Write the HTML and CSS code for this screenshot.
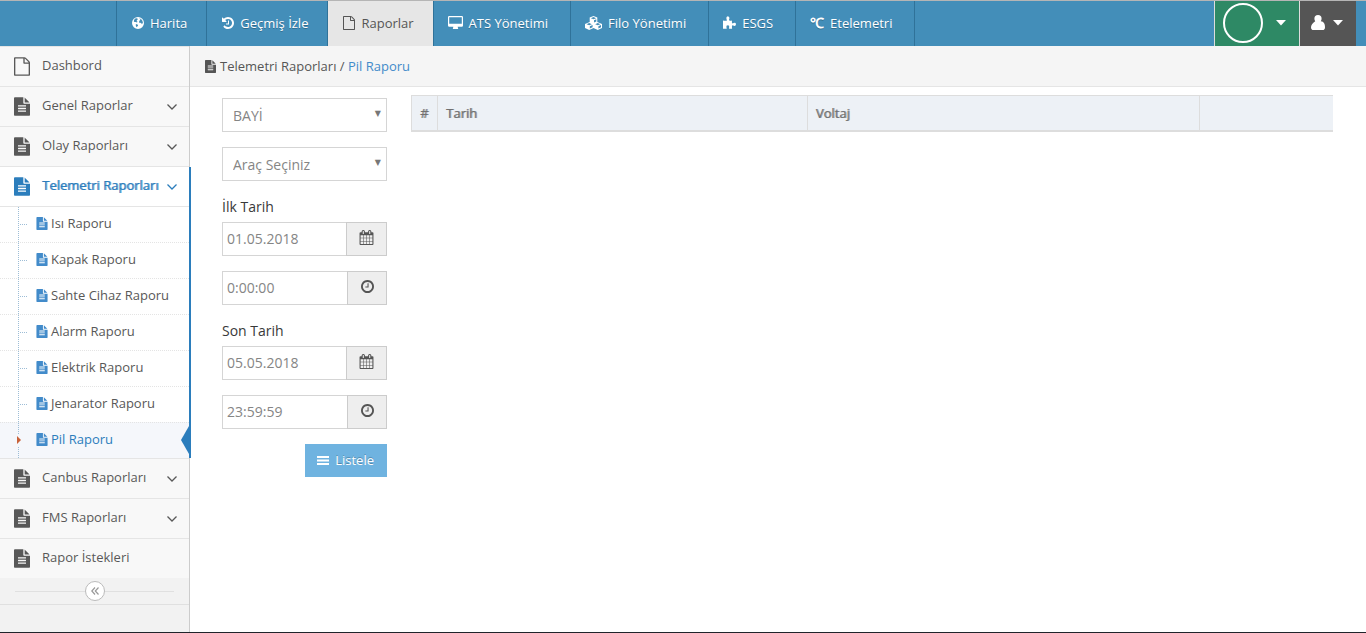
FILE: index.html
```html
<!DOCTYPE html>
<html lang="tr">
<head>
<meta charset="utf-8">
<title>Pil Raporu</title>
<link rel="stylesheet" href="styles.css">
</head>
<body>
<svg class="sprite" aria-hidden="true">
  <symbol id="doc" viewBox="0 0 1536 1792"><path d="M1468 476q14 14 28 36h-472v-472q22 14 36 28zm-476 164h544v1056q0 40-28 68t-68 28h-1344q-40 0-68-28t-28-68v-1600q0-40 28-68t68-28h800v544q0 40 28 68t68 28zm160 736v-64q0-14-9-23t-23-9h-704q-14 0-23 9t-9 23v64q0 14 9 23t23 9h704q14 0 23-9t9-23zm0-256v-64q0-14-9-23t-23-9h-704q-14 0-23 9t-9 23v64q0 14 9 23t23 9h704q14 0 23-9t9-23zm0-256v-64q0-14-9-23t-23-9h-704q-14 0-23 9t-9 23v64q0 14 9 23t23 9h704q14 0 23-9t9-23z"/></symbol>
  <symbol id="doc-o" viewBox="0 0 1536 1792"><path d="M1468 380q28 28 48 76t20 88v1152q0 40-28 68t-68 28h-1344q-40 0-68-28t-28-68v-1600q0-40 28-68t68-28h896q40 0 88 20t76 48zm-444-244v376h376q-10-29-22-41l-313-313q-12-12-41-22zm384 1528v-1024h-416q-40 0-68-28t-28-68v-416h-768v1536h1280z"/></symbol>
  <symbol id="calendar" viewBox="64 0 1664 1792"><path d="M192 1664h288v-288h-288v288zm352 0h320v-288h-320v288zm-352-352h288v-320h-288v320zm352 0h320v-320h-320v320zm-352-384h288v-288h-288v288zm736 736h320v-288h-320v288zm-384-736h320v-288h-320v288zm768 736h288v-288h-288v288zm-384-352h320v-320h-320v320zm-352-864v-288q0-13-9.500-22.500t-22.500-9.500h-64q-13 0-22.500 9.500t-9.500 22.500v288q0 13 9.500 22.500t22.500 9.500h64q13 0 22.500-9.500t9.500-22.500zm736 864h288v-320h-288v320zm-384-384h320v-288h-320v288zm384 0h288v-288h-288v288zm32-480v-288q0-13-9.500-22.500t-22.500-9.500h-64q-13 0-22.500 9.500t-9.500 22.500v288q0 13 9.500 22.500t22.500 9.500h64q13 0 22.500-9.500t9.500-22.500zm384-64v1280q0 52-38 90t-90 38h-1408q-52 0-90-38t-38-90v-1280q0-52 38-90t90-38h128v-96q0-66 47-113t113-47h64q66 0 113 47t47 113v96h384v-96q0-66 47-113t113-47h64q66 0 113 47t47 113v96h128q52 0 90 38t38 90z"/></symbol>
  <symbol id="clock" viewBox="128 128 1536 1536"><path d="M1024 544v448q0 14-9 23t-23 9h-320q-14 0-23-9t-9-23v-64q0-14 9-23t23-9h224v-352q0-14 9-23t23-9h64q14 0 23 9t9 23zm416 352q0-148-73-273t-198-198-273-73-273 73-198 198-73 273 73 273 198 198 273 73 273-73 198-198 73-273zm224 0q0 209-103 385.500t-279.500 279.500-385.500 103-385.500-103-279.500-279.500-103-385.500 103-385.500 279.500-279.500 385.500-103 385.500 103 279.500 279.500 103 385.500z"/></symbol>
  <symbol id="history" viewBox="128 128 1536 1536"><path d="M1664 896q0 156-61 298t-164 245-245 164-298 61q-172 0-327-72.500t-264-204.500q-7-10-6.500-22.500t8.500-20.500l137-138q10-9 25-9 16 2 23 12 73 95 179 147t225 52q104 0 198.500-40.500t163.500-109.500 109.500-163.500 40.500-198.500-40.500-198.500-109.500-163.500-163.500-109.500-198.500-40.500q-98 0-188 35.500t-160 101.500l137 138q31 30 14 69-17 40-59 40h-448q-26 0-45-19t-19-45v-448q0-42 40-59 39-17 69 14l130 129q107-101 244.500-156.500t284.500-55.500q156 0 298 61t245 164 164 245 61 298zm-640-288v448q0 14-9 23t-23 9h-320q-14 0-23-9t-9-23v-64q0-14 9-23t23-9h224v-352q0-14 9-23t23-9h64q14 0 23 9t9 23z"/></symbol>
  <symbol id="globe" viewBox="0 0 12 12"><path fill-rule="evenodd" d="M6 0a6 6 0 1 0 0 12a6 6 0 0 0 0-12zM3.200 1.600l1.600-.4 1.200.7-.7.8-.8 1.200 1 .6-.5.900-1.400-.5-1.200.2-.6-.8c.1-1 .6-2 1.400-2.700zM7.200 1.200l1.800.8 1.400 1.700.5 2.100-1 1.500-.9-1.500-1.300.2-.7-1 .6-1.500.9-.7zM3.900 7l1.700.5.5 1-.8.9-.8.8-.7-1.600z"/></symbol>
  <symbol id="desktop" viewBox="0 0 15 13"><path fill-rule="evenodd" d="M1.200 0h12.600Q15 0 15 1.200v8.300q0 1.200-1.200 1.200H9.600l.5 1.500v.8H4.900v-.8l.5-1.500H1.200Q0 10.700 0 9.500V1.200Q0 0 1.200 0zM1.200 1.200v6.500h12.600V1.200z"/></symbol>
  <symbol id="cubes" viewBox="0 0 17 14"><path fill-rule="evenodd" d="M8.500 0l3.800 1.600v4.300L17 8v4l-4.200 2-4.300-1.900L4.200 14 0 12V8l4.700-2.100V1.600zM8.500 1.100L5.900 2.200l2.600 1.100 2.600-1.100zM9 4.300v2.300l2.300-1V3.300zM4.200 7.100L1.600 8.200l2.600 1.100 2.600-1.100zM4.800 10.300v2.300l2.800-1.300V9.100zM12.800 7.100l-2.600 1.100 2.600 1.100 2.600-1.100zM13.400 10.300v2.300l2.600-1.300V9.100z"/></symbol>
  <symbol id="puzzle" viewBox="0 0 13 13"><path d="M0 4.500q2 .5 3.700.2Q4.300 4.200 3.400 3 3 .5 4.800.3q2 .1 1.600 2.400-.9 1.400-.1 1.900 1.500.3 2.700-.2-.2 1.500 0 2.600.5.800 1.600 0Q12.900 6.300 13 8.300q-.2 2-2.100 1.500-1.500-1-1.900 0-.2 1.300.1 3H6.300q-.8-.5-.1-1.500.5-2-1.300-2.100-2 .1-1.500 2 .8 1.100 0 1.600H0z"/></symbol>
  <symbol id="user" viewBox="0 0 14 15"><path d="M7 0a3.700 3.700 0 0 1 3.600 3.700q0 1.400-.8 2.500C13 6.500 14 9 14 12.200Q14 15 11.500 15h-9Q0 15 0 12.200 0 9 4.200 6.200a4 4 0 0 1-.8-2.500A3.700 3.700 0 0 1 7 0z"/></symbol>
  <symbol id="caret" viewBox="0 0 10 6"><path d="M0 0h10L5 5.500z"/></symbol>
  <symbol id="chevron" viewBox="0 0 10 6"><path d="M.5.500L5 5 9.500.500" fill="none" stroke="currentColor" stroke-width="1.300"/></symbol>
  <symbol id="double-left" viewBox="0 0 8 8"><path d="M4 .5L.8 4 4 7.500M7.500.5L4.300 4l3.200 3.500" fill="none" stroke="currentColor" stroke-width="1.200"/></symbol>
  <symbol id="bars" viewBox="0 0 12 9"><path d="M0 0h12v2H0zM0 3.500h12v2H0zM0 7h12v2H0z"/></symbol>
</svg>

<header class="navbar">
  <nav class="nav-main">
    <a href="#"><svg class="i12"><use href="#globe"/></svg>Harita</a>
    <a href="#"><svg class="i12"><use href="#history"/></svg>Geçmiş İzle</a>
    <a href="#" class="current"><svg class="i-doc-nav"><use href="#doc-o"/></svg>Raporlar</a>
    <a href="#" class="wide"><svg class="i-desktop"><use href="#desktop"/></svg>ATS Yönetimi</a>
    <a href="#" class="wide"><svg class="i-cubes"><use href="#cubes"/></svg>Filo Yönetimi</a>
    <a href="#" class="wide"><svg class="i13"><use href="#puzzle"/></svg>ESGS</a>
    <a href="#" class="wide"><span class="celsius">℃</span>Etelemetri</a>
  </nav>
  <div class="nav-user">
    <button class="account" type="button" aria-label="Hesap"><span class="ring"></span><svg class="i-caret"><use href="#caret"/></svg></button>
    <button class="profile" type="button" aria-label="Profil"><svg class="i-user"><use href="#user"/></svg><svg class="i-caret"><use href="#caret"/></svg></button>
  </div>
</header>

<div class="page">
  <aside class="sidebar">
    <ul class="menu">
      <li><a href="#"><svg class="i-doc"><use href="#doc-o"/></svg><span>Dashbord</span></a></li>
      <li><a href="#"><svg class="i-doc"><use href="#doc"/></svg><span>Genel Raporlar</span><svg class="i-chev"><use href="#chevron"/></svg></a></li>
      <li><a href="#"><svg class="i-doc"><use href="#doc"/></svg><span>Olay Raporları</span><svg class="i-chev"><use href="#chevron"/></svg></a></li>
      <li class="open"><a href="#"><svg class="i-doc"><use href="#doc"/></svg><span>Telemetri Raporları</span><svg class="i-chev"><use href="#chevron"/></svg></a>
        <ul class="submenu">
          <li><a href="#"><svg class="i-sub"><use href="#doc"/></svg>Isı Raporu</a></li>
          <li><a href="#"><svg class="i-sub"><use href="#doc"/></svg>Kapak Raporu</a></li>
          <li><a href="#"><svg class="i-sub"><use href="#doc"/></svg>Sahte Cihaz Raporu</a></li>
          <li><a href="#"><svg class="i-sub"><use href="#doc"/></svg>Alarm Raporu</a></li>
          <li><a href="#"><svg class="i-sub"><use href="#doc"/></svg>Elektrik Raporu</a></li>
          <li><a href="#"><svg class="i-sub"><use href="#doc"/></svg>Jenarator Raporu</a></li>
          <li class="active"><a href="#"><svg class="i-sub"><use href="#doc"/></svg>Pil Raporu</a></li>
        </ul>
      </li>
      <li><a href="#"><svg class="i-doc"><use href="#doc"/></svg><span>Canbus Raporları</span><svg class="i-chev"><use href="#chevron"/></svg></a></li>
      <li><a href="#"><svg class="i-doc"><use href="#doc"/></svg><span>FMS Raporları</span><svg class="i-chev"><use href="#chevron"/></svg></a></li>
      <li><a href="#"><svg class="i-doc"><use href="#doc"/></svg><span>Rapor İstekleri</span></a></li>
    </ul>
    <div class="collapse"><button type="button" aria-label="Menüyü daralt"><svg class="i-double"><use href="#double-left"/></svg></button></div>
  </aside>

  <main class="main">
    <div class="breadcrumb"><svg class="i-crumb"><use href="#doc"/></svg><span>Telemetri Raporları / <a href="#">Pil Raporu</a></span></div>
    <div class="content">
      <form class="filters">
        <div class="select"><select aria-label="Bayi"><option>BAYİ</option></select></div>
        <div class="select"><select aria-label="Araç"><option>Araç Seçiniz</option></select></div>
        <div class="field">
          <label for="d1">İlk Tarih</label>
          <div class="group"><input id="d1" type="text" value="01.05.2018"><button type="button" aria-label="Takvim"><svg class="i-cal"><use href="#calendar"/></svg></button></div>
        </div>
        <div class="group time"><input type="text" aria-label="İlk saat" value="0:00:00"><button type="button" aria-label="Saat"><svg class="i13"><use href="#clock"/></svg></button></div>
        <div class="field">
          <label for="d2">Son Tarih</label>
          <div class="group"><input id="d2" type="text" value="05.05.2018"><button type="button" aria-label="Takvim"><svg class="i-cal"><use href="#calendar"/></svg></button></div>
        </div>
        <div class="group time"><input type="text" aria-label="Son saat" value="23:59:59"><button type="button" aria-label="Saat"><svg class="i13"><use href="#clock"/></svg></button></div>
        <button class="submit" type="button"><svg class="i-bars"><use href="#bars"/></svg>Listele</button>
      </form>
      <div class="results">
        <table>
          <colgroup><col class="c-no"><col class="c-date"><col class="c-volt"><col></colgroup>
          <thead><tr><th>#</th><th>Tarih</th><th>Voltaj</th><th></th></tr></thead>
        </table>
      </div>
    </div>
  </main>
</div>
</body>
</html>
```
FILE: styles.css
```css
* { box-sizing: border-box; }
body {
  margin: 0;
  min-height: 100vh;
  display: flex;
  flex-direction: column;
  border-top: 1px solid #b5b5b5;
  border-bottom: 1px solid #20242b;
  background: #fff;
  color: #393939;
  font: 13px/20px "Open Sans", sans-serif;
}
a { color: inherit; text-decoration: none; }
ul { list-style: none; margin: 0; padding: 0; }
button, input, select { font: inherit; border-radius: 0; margin: 0; }
svg { display: block; fill: currentColor; flex: none; }
.sprite { position: absolute; width: 0; height: 0; }

.i12 { width: 12px; height: 12px; }
.i13 { width: 13px; height: 13px; }
.i-doc-nav { width: 12px; height: 14px; }
.i-desktop { width: 15px; height: 13px; }
.i-cubes { width: 17px; height: 14px; }
.i-caret { width: 10px; height: 6px; }
.i-user { width: 14px; height: 15px; }
.i-doc { width: 16px; height: 19px; }
.i-chev { width: 10px; height: 6px; }
.i-sub { width: 12px; height: 13px; margin-top: 2px; }
.i-crumb { width: 11px; height: 13px; }
.i-double { width: 8px; height: 8px; }
.i-cal { width: 15px; height: 15px; }
.i-bars { width: 12px; height: 9px; }

/* Top bar */
.navbar { display: flex; justify-content: space-between; height: 45px; background: #438eb9; color: #fff; }
.nav-main { display: flex; margin-left: 116px; border-right: 1px solid #2f7299; }
.nav-main a {
  display: flex;
  align-items: center;
  gap: 6px;
  padding: 0 19px 2px 15px;
  border-left: 1px solid #2f7299;
  text-shadow: 0 1px 0 rgba(0, 0, 0, .25);
  white-space: nowrap;
}
.nav-main a.wide { padding: 0 22px 2px 14px; }
.nav-main a.current { background: #e6e6e6; color: #555; text-shadow: none; }
.celsius { font-weight: 700; font-size: 14px; }
.nav-user { display: flex; padding-right: 10px; }
.nav-user button { display: flex; align-items: center; border: 0; border-left: 1px solid #ddd; color: #fff; }
.nav-user .account { gap: 13px; padding: 0 13px 1px 8px; background: #2e8965; }
.ring { width: 40px; height: 40px; border: 2px solid #fff; border-radius: 50%; }
.nav-user .profile { gap: 8px; padding: 0 13px 2px 11px; background: #555; }

/* Sidebar */
.page { flex: 1; display: flex; }
.sidebar { width: 190px; flex: none; background: #f2f2f2; border-right: 1px solid #ccc; color: #585858; }
.menu > li { border-top: 1px solid #e5e5e5; background: #f8f8f8; }
.menu > li > a { display: flex; align-items: center; height: 39px; padding: 0 12px 0 14px; }
.menu > li > a > span { flex: 1; white-space: nowrap; padding: 0 0 4px 12px; }
.menu > .open { position: relative; background: #fff; }
.open > a { color: #2b7dbc; }
.open > a > span { text-shadow: 1px 0 0 rgba(43, 125, 188, .7); }
.open::after { content: ""; position: absolute; top: 0; bottom: 0; right: -2px; width: 2px; background: #2b7dbc; }
.submenu { position: relative; border-top: 1px solid #e5e5e5; }
.submenu::before { content: ""; position: absolute; z-index: 1; top: 0; bottom: 0; left: 18px; border-left: 1px dotted #9dbdd6; }
.submenu li { position: relative; }
.submenu li + li { border-top: 1px dotted #e4e4e4; }
.submenu a { display: flex; align-items: center; gap: 3px; height: 35px; padding: 0 0 4px 36px; white-space: nowrap; }
.submenu .i-sub { color: #428bca; }
.submenu li::before { content: ""; position: absolute; top: 17px; left: 20px; width: 7px; border-top: 1px dotted #9dbdd6; }
.submenu .active { background: #f5f7fb; color: #2b7dbc; }
.submenu .active a::before { content: ""; position: absolute; z-index: 2; top: 11px; left: 18px; width: 1px; height: 12px; background: #f5f7fb; }
.submenu .active::before {
  z-index: 3;
  top: 13px;
  left: 17px;
  width: 0;
  border: solid transparent;
  border-width: 4px 0 4px 4px;
  border-left-color: #c86139;
}
.submenu .active::after { content: ""; position: absolute; top: 3px; right: 0; border: solid transparent; border-width: 14px 8px 14px 0; border-right-color: #2b7dbc; }
.collapse { position: relative; display: flex; justify-content: center; height: 27px; padding-top: 3px; border-bottom: 1px solid #e0e0e0; }
.collapse::before { content: ""; position: absolute; top: 13px; left: 15px; right: 15px; border-top: 1px solid #e0e0e0; }
.collapse button { position: relative; display: grid; place-items: center; width: 20px; height: 20px; padding: 0; border: 1px solid #bbb; border-radius: 50%; background: #fff; color: #999; }

/* Main area */
.main { flex: 1; min-width: 0; }
.breadcrumb { display: flex; align-items: center; gap: 4px; height: 41px; padding-left: 15px; border-bottom: 1px solid #e5e5e5; background: #f5f5f5; color: #555; }
.breadcrumb a { color: #428bca; }
.content { display: flex; align-items: flex-start; gap: 24px; padding: 8px 33px 20px 32px; }
.filters { display: flex; flex-direction: column; gap: 15px; width: 165px; flex: none; padding-top: 3px; }
.select { position: relative; }
.select::after { content: "▼"; position: absolute; right: 6px; top: 6px; font: 8px/20px "DejaVu Sans", sans-serif; color: #777; pointer-events: none; }
select { appearance: none; display: block; width: 100%; height: 34px; padding: 2px 20px 0 10px; border: 1px solid #d5d5d5; background: #fff; color: #858585; font-size: 14px; }
.field label { display: block; height: 26px; padding-top: 1px; font-size: 14px; }
.group { display: flex; height: 34px; }
.group input { flex: 1; min-width: 0; padding: 0 4px; border: 1px solid #d5d5d5; border-right: 0; background: #fff; color: #858585; font-size: 14px; }
.group button { display: grid; place-items: center; width: 41px; padding: 0 0 4px; border: 1px solid #ccc; background: #eee; color: #555; }
.group.time button { width: 40px; }
.submit { display: flex; align-items: center; gap: 6px; align-self: flex-end; height: 33px; padding: 0 13px 1px 12px; border: 0; background: #6fb3e0; color: #fff; text-shadow: 0 -1px 0 rgba(0, 0, 0, .25); }
.results { flex: 1; min-width: 0; }
table { width: 100%; table-layout: fixed; border-collapse: separate; border-spacing: 0; }
th { height: 37px; padding: 0 8px; border: solid #ddd; border-width: 1px 0 2px 1px; background: #edf1f6; color: #707070; font-weight: 400; text-align: left; text-shadow: 1px 0 0 rgba(112, 112, 112, .7); }
.c-no { width: 26px; }
.c-date { width: 40.1%; }
.c-volt { width: 42.6%; }
```
